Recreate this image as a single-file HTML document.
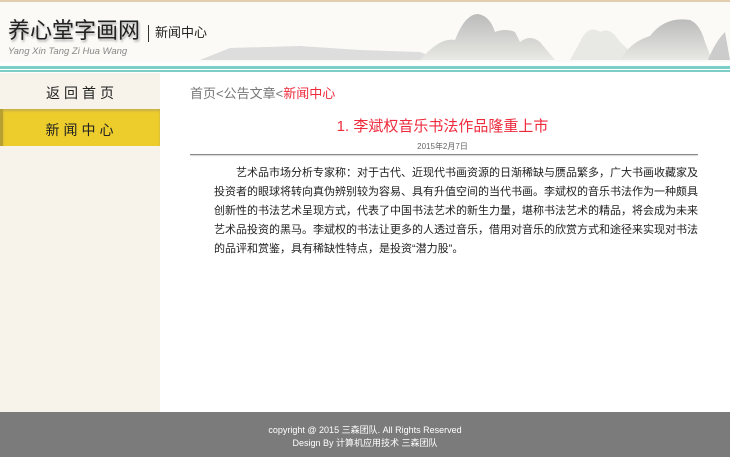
<!DOCTYPE html>
<html><head><meta charset="utf-8"><style>
*{margin:0;padding:0;box-sizing:border-box}
body{width:730px;height:457px;position:relative;background:#fff;font-family:"Liberation Sans","Noto Sans CJK SC",sans-serif;overflow:hidden}
.hdr{position:absolute;left:0;top:0;width:730px;height:62px;background:#fbfaf7;border-top:2px solid #e3cdb0}
.logo{position:absolute;left:8px;top:15px;font-size:22px;line-height:28px;color:#222;text-shadow:1px 2px 2px #aaa;white-space:nowrap}
.sub{position:absolute;left:8px;top:44px;font-size:9.5px;color:#888;font-style:italic;white-space:nowrap}
.sep{position:absolute;left:148px;top:23px;width:1px;height:17px;background:#333}
.news{position:absolute;left:155px;top:22px;font-size:13px;line-height:18px;color:#222}
.t1{position:absolute;left:0;top:66px;width:730px;height:3px;background:#7ccfc6}
.t2{position:absolute;left:0;top:70px;width:730px;height:2px;background:#7ccfc6}
.side{position:absolute;left:0;top:73px;width:160px;height:340px;background:#f7f3eb}
.b1{position:absolute;left:0;top:2px;width:160px;height:36px;text-align:center;line-height:36px;font-size:14px;letter-spacing:4px;padding-left:4px;color:#222}
.b2{position:absolute;left:0;top:36px;width:160px;height:37px;background:#eccd2c;border-left:3px solid #b8a030;box-shadow:inset 0 2px 2px #c8b04a;text-align:center;line-height:42px;font-size:14px;letter-spacing:4px;color:#222}
.crumb{position:absolute;left:190px;top:83px;font-size:13px;color:#777}
.crumb span{color:#ee2b3c}
.title{position:absolute;left:190px;top:115px;width:505px;text-align:center;font-size:15px;color:#ee2b3c}
.date{position:absolute;left:190px;top:141px;width:505px;text-align:center;font-size:8px;color:#666}
.hr{position:absolute;left:190px;top:154px;width:508px;height:1px;background:#888;box-shadow:0 1px 1px #ccc}
.body{position:absolute;left:214px;top:164px;width:490px;font-size:11px;line-height:19px;color:#222;text-indent:22px}
.ft{position:absolute;left:0;top:412px;width:730px;height:45px;background:#7b7b7b;color:#fff;font-size:9px;text-align:center;padding-top:12px;line-height:13px}
</style></head><body>
<div class="hdr">
<svg style="position:absolute;left:0;top:0" width="730" height="60">
<defs><linearGradient id="g" x1="0" y1="0" x2="0" y2="1"><stop offset="0" stop-color="#bbb"/><stop offset="1" stop-color="#e8e8e4"/></linearGradient></defs>
<path d="M200 58 L230 46 L300 44 L360 48 L420 50 L440 58Z" fill="#ddd"/>
<path d="M420 58 Q440 35 455 38 Q465 12 478 12 Q490 14 495 30 Q505 26 515 30 L520 40 Q530 32 540 40 L555 58Z" fill="url(#g)"/>
<path d="M570 58 L580 40 Q588 22 600 30 Q610 24 620 40 L640 58Z" fill="#e8e8e5"/>
<path d="M620 58 Q630 40 650 34 Q665 14 690 18 Q700 22 705 40 L712 58Z" fill="url(#g)"/>
<path d="M708 58 Q715 40 725 30 L730 58Z" fill="#ccc"/>
</svg>
<div class="logo">养心堂字画网</div>
<div class="sub">Yang Xin Tang Zi Hua Wang</div>
<div class="sep"></div>
<div class="news">新闻中心</div>
</div>
<div class="t1"></div><div class="t2"></div>
<div class="side"><div class="b1">返回首页</div><div class="b2">新闻中心</div></div>
<div class="crumb">首页&lt;公告文章&lt;<span>新闻中心</span></div>
<div class="title">1. 李斌权音乐书法作品隆重上市</div>
<div class="date">2015年2月7日</div>
<div class="hr"></div>
<div class="body">艺术品市场分析专家称：对于古代、近现代书画资源的日渐稀缺与赝品繁多，广大书画收藏家及投资者的眼球将转向真伪辨别较为容易、具有升值空间的当代书画。李斌权的音乐书法作为一种颇具创新性的书法艺术呈现方式，代表了中国书法艺术的新生力量，堪称书法艺术的精品，将会成为未来艺术品投资的黑马。李斌权的书法让更多的人透过音乐，借用对音乐的欣赏方式和途径来实现对书法的品评和赏鉴，具有稀缺性特点，是投资“潜力股”。</div>
<div class="ft">copyright @ 2015 三森团队. All Rights Reserved<br>Design By 计算机应用技术 三森团队</div>
</body></html>
